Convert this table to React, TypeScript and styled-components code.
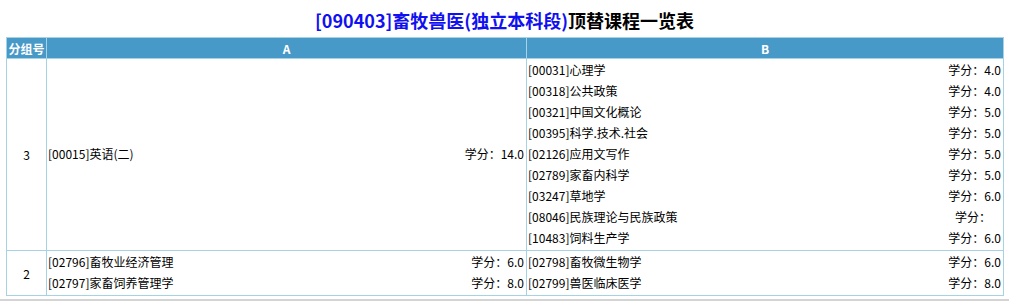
import React from 'react';
import styled, {createGlobalStyle} from 'styled-components';

const GlobalStyle = createGlobalStyle`
  body {
    margin: 0;
    background: #fff;
    font-family: "Microsoft YaHei", "Noto Sans CJK SC", sans-serif;
    font-size: 12px;
    color: #000;
  }
`;

const Page = styled.div`
  width: 1009px;
`;

const Title = styled.h1`
  margin: 0 0 5px;
  padding-top: 8px;
  height: 24px;
  line-height: 24px;
  text-align: center;
  font-size: 18px;
  font-weight: bold;
  color: #000;
`;

const Blue = styled.span`
  color: #1010f0;
`;

const Table = styled.table`
  margin-left: 6px;
  width: 998px;
  border-collapse: collapse;
  table-layout: fixed;
`;

const HeadCell = styled.th<{$w?: number}>`
  ${p => (p.$w ? `width: ${p.$w}px;` : '')}
  height: 20px;
  padding: 0;
  background: #4799c8;
  color: #fff;
  font-weight: bold;
  font-size: 12px;
  text-align: center;
  border: 1px solid #a6d3e3;
`;

const GroupCell = styled.td`
  padding: 0;
  text-align: center;
  vertical-align: middle;
  border: 1px solid #a6d3e3;
`;

const ListCell = styled.td`
  padding: 0 2px 2px 1px;
  vertical-align: middle;
  border: 1px solid #a6d3e3;
`;

const Item = styled.div`
  display: flex;
  justify-content: space-between;
  height: 21px;
  line-height: 21px;
  white-space: nowrap;
`;

const Credit = styled.span<{$empty?: boolean}>`
  padding-right: ${p => (p.$empty ? '10px' : '0')};
`;

const Footer = styled.div`
  margin-top: 3px;
  border-top: 2px solid #d4d4d4;
`;

type Course = {code: string; name: string; credit?: string};

const groups: {no: string; a: Course[]; b: Course[]}[] = [
  {
    no: '3',
    a: [{code: '00015', name: '英语(二)', credit: '14.0'}],
    b: [
      {code: '00031', name: '心理学', credit: '4.0'},
      {code: '00318', name: '公共政策', credit: '4.0'},
      {code: '00321', name: '中国文化概论', credit: '5.0'},
      {code: '00395', name: '科学.技术.社会', credit: '5.0'},
      {code: '02126', name: '应用文写作', credit: '5.0'},
      {code: '02789', name: '家畜内科学', credit: '5.0'},
      {code: '03247', name: '草地学', credit: '6.0'},
      {code: '08046', name: '民族理论与民族政策'},
      {code: '10483', name: '饲料生产学', credit: '6.0'},
    ],
  },
  {
    no: '2',
    a: [
      {code: '02796', name: '畜牧业经济管理', credit: '6.0'},
      {code: '02797', name: '家畜饲养管理学', credit: '8.0'},
    ],
    b: [
      {code: '02798', name: '畜牧微生物学', credit: '6.0'},
      {code: '02799', name: '兽医临床医学', credit: '8.0'},
    ],
  },
];

const CourseList = ({items}: {items: Course[]}) => (
  <>
    {items.map(c => (
      <Item key={c.code}>
        <span>[{c.code}]{c.name}</span>
        <Credit $empty={!c.credit}>学分：{c.credit ?? ''}</Credit>
      </Item>
    ))}
  </>
);

const App: React.FC = () => {
  return (
    <Page>
      <GlobalStyle />
      <Title>
        <Blue>[090403]畜牧兽医(独立本科段)</Blue>顶替课程一览表
      </Title>
      <Table>
        <thead>
          <tr>
            <HeadCell $w={39}>分组号</HeadCell>
            <HeadCell $w={479}>A</HeadCell>
            <HeadCell>B</HeadCell>
          </tr>
        </thead>
        <tbody>
          {groups.map(g => (
            <tr key={g.no}>
              <GroupCell>{g.no}</GroupCell>
              <ListCell>
                <CourseList items={g.a} />
              </ListCell>
              <ListCell>
                <CourseList items={g.b} />
              </ListCell>
            </tr>
          ))}
        </tbody>
      </Table>
      <Footer />
    </Page>
  );
};

export default App;
